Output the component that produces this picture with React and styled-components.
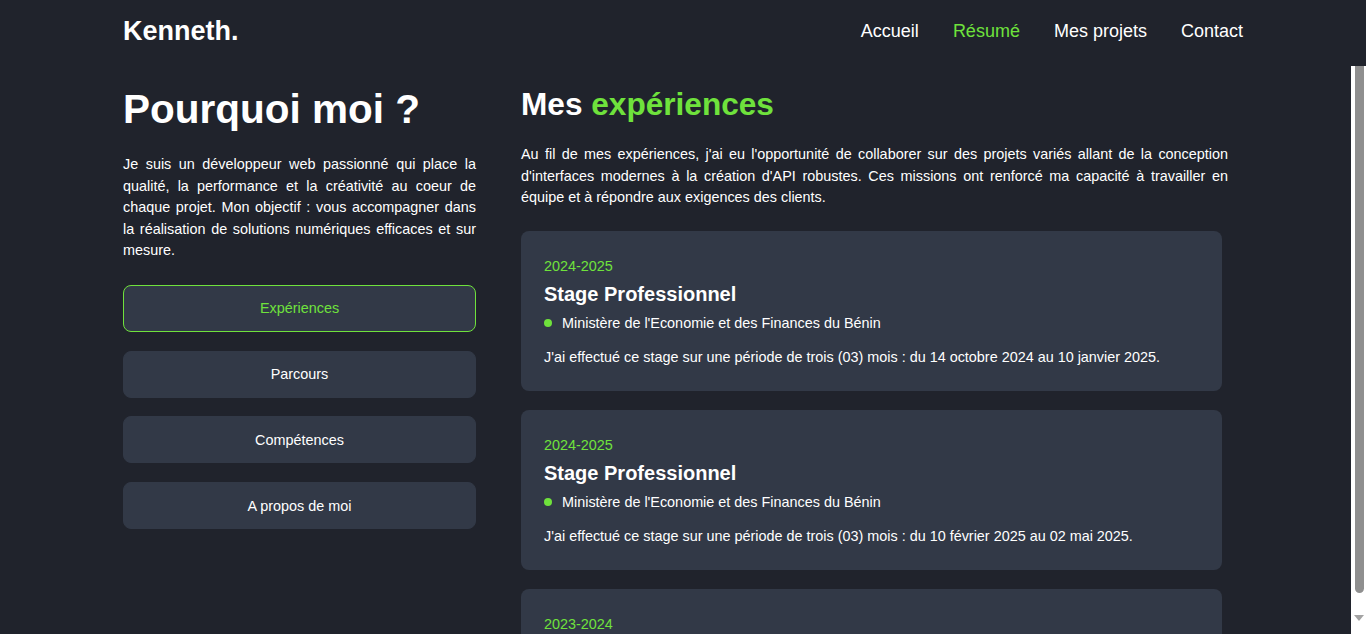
import styled, { createGlobalStyle } from "styled-components";

const green = "#6fe23c";

const Global = createGlobalStyle`
  * { box-sizing: border-box; }
  html, body { margin: 0; padding: 0; height: 100%; overflow: hidden; }
  body {
    background: #20232c;
    color: #ffffff;
    font-family: "Liberation Sans", Arial, sans-serif;
  }
`;

const Page = styled.div`
  height: 100vh;
  display: flex;
  flex-direction: column;
`;

const Header = styled.header`
  height: 66px;
  flex-shrink: 0;
  display: flex;
  justify-content: center;
`;

const HeaderInner = styled.div`
  width: 1120px;
  display: flex;
  align-items: center;
  justify-content: space-between;
  padding-bottom: 4px;
`;

const Logo = styled.div`
  font-size: 27px;
  font-weight: 700;
  color: #fff;
`;

const Nav = styled.nav`
  display: flex;
  gap: 34px;
`;

const NavLink = styled.a`
  font-size: 18px;
  color: ${(p) => (p.$active ? green : "#fff")};
  text-decoration: none;
  cursor: pointer;
`;

const Main = styled.main`
  position: relative;
  flex: 1;
  min-height: 0;
  overflow: hidden;
  display: flex;
  justify-content: center;
`;

const ScrollTrack = styled.div`
  position: absolute;
  top: 0;
  right: 0;
  bottom: 0;
  width: 15px;
  background: #ffffff;
  display: flex;
  flex-direction: column;
  align-items: center;
  padding-bottom: 13px;
`;

const Thumb = styled.div`
  width: 9px;
  height: 527px;
  margin-left: 1px;
  background: #8f8f8f;
  border-radius: 0 0 5px 5px;
`;

const Arrow = styled.div`
  margin-top: auto;
  width: 0;
  height: 0;
  border-left: 5px solid transparent;
  border-right: 5px solid transparent;
  border-top: 6px solid #a3a3a3;
`;

const Content = styled.div`
  width: 1120px;
  padding-top: 20px;
  display: grid;
  grid-template-columns: 353px 1fr;
  column-gap: 45px;
  align-items: start;
`;

const Side = styled.aside`
  display: flex;
  flex-direction: column;
`;

const BigTitle = styled.h1`
  margin: 0;
  font-size: 40.5px;
  line-height: 46px;
  font-weight: 700;
`;

const Text = styled.p`
  margin: ${(p) => p.$margin || "0"};
  font-size: 14.4px;
  line-height: 21.6px;
  text-align: justify;
  max-width: ${(p) => p.$max || "none"};
`;

const Tabs = styled.div`
  margin-top: 23px;
  display: flex;
  flex-direction: column;
  gap: 18.7px;
`;

const Tab = styled.button`
  height: 47px;
  border-radius: 8px;
  border: 1px solid ${(p) => (p.$active ? green : "#323947")};
  background: #323947;
  color: ${(p) => (p.$active ? green : "#fff")};
  font-family: inherit;
  font-size: 14.4px;
  cursor: pointer;
`;

const Section = styled.section`
  display: flex;
  flex-direction: column;
`;

const Title = styled.h2`
  margin: 0;
  font-size: 31.6px;
  line-height: 37px;
  font-weight: 700;
`;

const Green = styled.span`
  color: ${green};
`;

const Cards = styled.div`
  margin-top: 22px;
  display: flex;
  flex-direction: column;
  gap: 19px;
  width: 701px;
`;

const Card = styled.article`
  background: #323947;
  border-radius: 8px;
  padding: 24px 23px 23px;
`;

const Period = styled.div`
  color: ${green};
  font-size: 14.4px;
  line-height: 22px;
`;

const Role = styled.h3`
  margin: 5px 0 0;
  font-size: 20px;
  line-height: 24px;
  font-weight: 700;
`;

const Org = styled.div`
  margin-top: 6px;
  display: flex;
  align-items: center;
  gap: 10px;
  font-size: 14.4px;
  line-height: 22px;

  &::before {
    content: "";
    width: 8px;
    height: 8px;
    border-radius: 50%;
    background: ${green};
  }
`;

const Desc = styled.p`
  margin: 12px 0 0;
  font-size: 14.4px;
  line-height: 22px;
`;

const experiences = [
  {
    period: "2024-2025",
    role: "Stage Professionnel",
    org: "Ministère de l'Economie et des Finances du Bénin",
    desc: "J'ai effectué ce stage sur une période de trois (03) mois : du 14 octobre 2024 au 10 janvier 2025.",
  },
  {
    period: "2024-2025",
    role: "Stage Professionnel",
    org: "Ministère de l'Economie et des Finances du Bénin",
    desc: "J'ai effectué ce stage sur une période de trois (03) mois : du 10 février 2025 au 02 mai 2025.",
  },
  {
    period: "2023-2024",
    role: "Stage Académique",
    org: "Ministère de l'Economie et des Finances du Bénin",
    desc: "J'ai effectué ce stage sur une période de deux (02) mois.",
  },
];

const tabs = ["Expériences", "Parcours", "Compétences", "A propos de moi"];

export default function App() {
  return (
    <Page>
      <Global />
      <Header>
        <HeaderInner>
          <Logo>Kenneth.</Logo>
          <Nav>
            <NavLink>Accueil</NavLink>
            <NavLink $active>Résumé</NavLink>
            <NavLink>Mes projets</NavLink>
            <NavLink>Contact</NavLink>
          </Nav>
        </HeaderInner>
      </Header>
      <Main>
        <Content>
          <Side>
            <BigTitle>Pourquoi moi ?</BigTitle>
            <Text $margin="22px 0 0">
              Je suis un développeur web passionné qui place la qualité, la
              performance et la créativité au coeur de chaque projet. Mon
              objectif : vous accompagner dans la réalisation de solutions
              numériques efficaces et sur mesure.
            </Text>
            <Tabs>
              {tabs.map((t, i) => (
                <Tab key={t} $active={i === 0}>
                  {t}
                </Tab>
              ))}
            </Tabs>
          </Side>
          <Section>
            <Title>
              Mes <Green>expériences</Green>
            </Title>
            <Text $margin="21px 0 0" $max="707px">
              Au fil de mes expériences, j'ai eu l'opportunité de collaborer
              sur des projets variés allant de la conception d'interfaces
              modernes à la création d'API robustes. Ces missions ont renforcé
              ma capacité à travailler en équipe et à répondre aux exigences
              des clients.
            </Text>
            <Cards>
              {experiences.map((e, i) => (
                <Card key={i}>
                  <Period>{e.period}</Period>
                  <Role>{e.role}</Role>
                  <Org>{e.org}</Org>
                  <Desc>{e.desc}</Desc>
                </Card>
              ))}
            </Cards>
          </Section>
        </Content>
        <ScrollTrack>
          <Thumb />
          <Arrow />
        </ScrollTrack>
      </Main>
    </Page>
  );
}
